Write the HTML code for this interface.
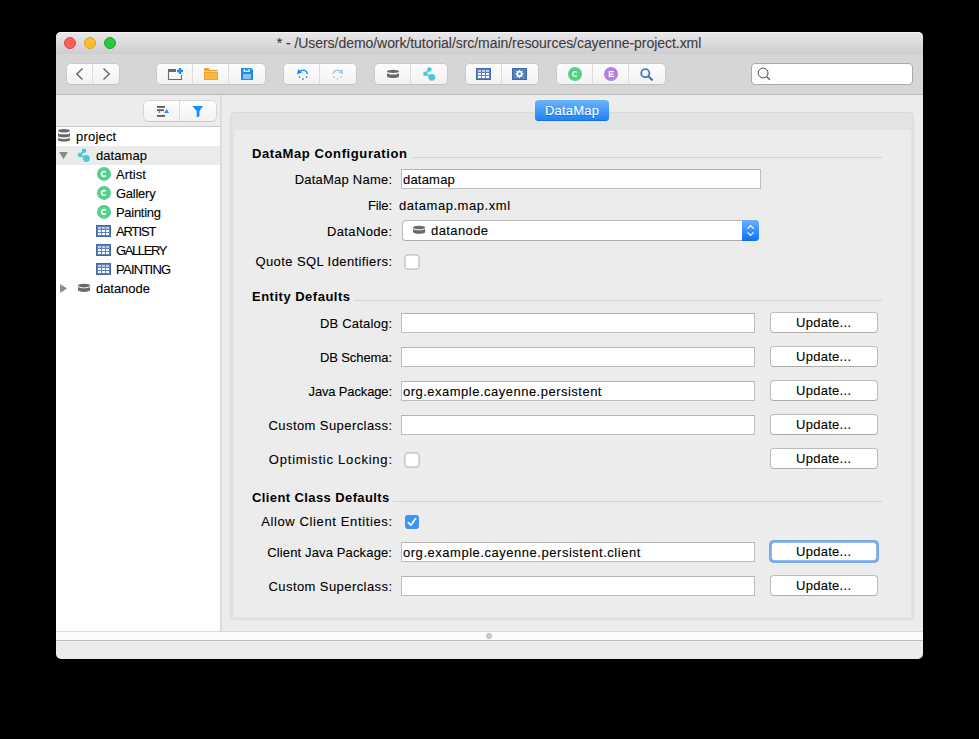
<!DOCTYPE html>
<html><head><meta charset="utf-8"><title>Cayenne Modeler</title>
<style>
*{margin:0;padding:0;box-sizing:border-box}
html,body{width:979px;height:739px;background:#000;overflow:hidden}
body{position:relative;font-family:"Liberation Sans",sans-serif;font-size:13px;line-height:16px;color:#000}
div,svg{position:absolute}
.t{white-space:nowrap;-webkit-text-stroke:0.1px currentColor}
#win{left:56px;top:32px;width:867px;height:627px;background:#ececec;border-radius:5px;overflow:hidden}
#titlebar{left:56px;top:32px;width:867px;height:22px;background:linear-gradient(#e8e6e8,#cfcdcf);border-radius:5px 5px 0 0;border-top:1px solid #f4f4f4}
#toolbar{left:56px;top:54px;width:867px;height:41px;background:#d6d6d6;border-bottom:1px solid #b9b9b9}
.light{top:37px;width:12px;height:12px;border-radius:50%;border:0.5px solid}
.seg{background:linear-gradient(#fdfdfd,#f2f2f2);border-radius:4px;box-shadow:0 0 0 0.5px #bdbdbd,0 0.5px 0.5px #b0b0b0}
.segdiv{width:1px;background:#dcdcdc}
.fld{background:#fff;border:1px solid #bebebe;border-top-color:#b4b4b4}
.btn{background:#fff;border-radius:4px;border:1px solid #bcbcbc;border-bottom-color:#acacac}
.chk{width:14px;height:14px;border-radius:3px;background:#fff;box-shadow:0 0 0 0.5px #a8a8a8,inset 0 0 0 0.5px #b5b5b5}
.sep{height:1px;background:#d3d3d3}
</style></head>
<body>
<div id="win"></div>
<div id="titlebar"></div>
<div class="light" style="left:64px;background:#fd5f57;border-color:#e0443e"></div>
<div class="light" style="left:84px;background:#febc2e;border-color:#dea123"></div>
<div class="light" style="left:104px;background:#28c840;border-color:#1aab29"></div>
<div class="t" style="top:35px;font-size:14px;letter-spacing:-0.05px;color:#3c3c3c;left:189px;width:600px;text-align:center;">* - /Users/demo/work/tutorial/src/main/resources/cayenne-project.xml</div>
<div id="toolbar"></div>
<div class="seg" style="left:67px;top:64px;width:52px;height:20px;"></div>
<div class="segdiv" style="left:92px;top:64px;width:1px;height:20px;"></div>
<div class="seg" style="left:157px;top:64px;width:108px;height:20px;"></div>
<div class="segdiv" style="left:192px;top:64px;width:1px;height:20px;"></div>
<div class="segdiv" style="left:228px;top:64px;width:1px;height:20px;"></div>
<div class="seg" style="left:284px;top:64px;width:72px;height:20px;"></div>
<div class="segdiv" style="left:319px;top:64px;width:1px;height:20px;"></div>
<div class="seg" style="left:375px;top:64px;width:72px;height:20px;"></div>
<div class="segdiv" style="left:410px;top:64px;width:1px;height:20px;"></div>
<div class="seg" style="left:466px;top:64px;width:72px;height:20px;"></div>
<div class="segdiv" style="left:501px;top:64px;width:1px;height:20px;"></div>
<div class="seg" style="left:557px;top:64px;width:108px;height:20px;"></div>
<div class="segdiv" style="left:592px;top:64px;width:1px;height:20px;"></div>
<div class="segdiv" style="left:628px;top:64px;width:1px;height:20px;"></div>
<div style="left:751px;top:63px;width:162px;height:22px;background:#fff;border:1px solid #a9a9a9;border-radius:4px"></div>
<div style="left:56px;top:95px;width:164px;height:32px;background:#ececec;border-bottom:1px solid #c9c9c9"></div>
<div style="left:56px;top:127px;width:164px;height:504px;background:#fff"></div>
<div style="left:220px;top:95px;width:2px;height:536px;background:#dcdcdc"></div>
<div class="seg" style="left:144px;top:101px;width:72px;height:20px;"></div>
<div class="segdiv" style="left:179px;top:101px;width:1px;height:20px;"></div>
<div style="left:56px;top:146px;width:164px;height:19px;background:#ebebeb"></div>
<div class="t" style="top:129px;letter-spacing:0.2px;left:76px;">project</div>
<div class="t" style="top:148px;letter-spacing:0.05px;left:96px;">datamap</div>
<div class="t" style="top:167px;letter-spacing:0.05px;left:116px;">Artist</div>
<div class="t" style="top:186px;letter-spacing:-0.25px;left:116px;">Gallery</div>
<div class="t" style="top:205px;letter-spacing:-0.3px;left:116px;">Painting</div>
<div class="t" style="top:224px;letter-spacing:-1.1px;left:116px;">ARTIST</div>
<div class="t" style="top:243px;letter-spacing:-1.4px;left:116px;">GALLERY</div>
<div class="t" style="top:262px;letter-spacing:-0.75px;left:116px;">PAINTING</div>
<div class="t" style="top:281px;letter-spacing:-0.05px;left:96px;">datanode</div>
<div style="left:230px;top:112px;width:684px;height:508px;background:#e3e3e3;border:1px solid #dadada;border-radius:4px"></div>
<div style="left:234px;top:130px;width:677px;height:487px;background:#ececec"></div>
<div style="left:535px;top:100px;width:74px;height:21px;border-radius:4px;background:linear-gradient(#6cb3fb,#1b80fb);box-shadow:inset 0 -1px 0 #1a6fe8"></div>
<div class="t" style="top:103px;letter-spacing:0.2px;color:#fff;left:545px;-webkit-text-stroke:0.1px #fff;text-shadow:0 0.5px 0.5px rgba(0,40,120,0.35)">DataMap</div>
<div class="t" style="top:146px;font-weight:700;-webkit-text-stroke:0;letter-spacing:0.6px;left:252px;">DataMap Configuration</div>
<div class="sep" style="left:413px;top:157px;width:469px;height:1px;"></div>
<div class="t" style="top:289px;font-weight:700;-webkit-text-stroke:0;letter-spacing:0.5px;left:252px;">Entity Defaults</div>
<div class="sep" style="left:354px;top:300px;width:528px;height:1px;"></div>
<div class="t" style="top:490px;font-weight:700;-webkit-text-stroke:0;letter-spacing:0.4px;left:252px;">Client Class Defaults</div>
<div class="sep" style="left:393px;top:501px;width:489px;height:1px;"></div>
<div class="t" style="top:172px;letter-spacing:0.22px;right:586.78px;text-align:right;">DataMap Name:</div>
<div class="fld" style="left:401px;top:169px;width:360px;height:20px;"></div>
<div class="t" style="top:172px;letter-spacing:0.2px;left:403px;">datamap</div>
<div class="t" style="top:198px;letter-spacing:-0.15px;right:587.15px;text-align:right;">File:</div>
<div class="t" style="top:198px;letter-spacing:0.55px;left:399px;">datamap.map.xml</div>
<div class="t" style="top:224px;letter-spacing:0.35px;right:586.65px;text-align:right;">DataNode:</div>
<div style="left:402px;top:220px;width:357px;height:21px;background:#fff;border-radius:4px;border:1px solid #bababa;border-bottom-color:#acacac"></div>
<div style="left:742px;top:220px;width:17px;height:21px;border-radius:0 4px 4px 0;background:linear-gradient(#6bb1fb,#0b6ffa)"></div>
<div class="t" style="top:223px;letter-spacing:0.4px;left:431px;">datanode</div>
<div class="t" style="top:254px;letter-spacing:0.4px;right:586.6px;text-align:right;">Quote SQL Identifiers:</div>
<div class="chk" style="left:405px;top:255px;width:14px;height:14px;"></div>
<div class="t" style="top:316px;letter-spacing:0.19px;right:586.81px;text-align:right;">DB Catalog:</div>
<div class="fld" style="left:401px;top:313px;width:354px;height:20px;"></div>
<div class="btn" style="left:770px;top:312px;width:108px;height:21px;"></div>
<div class="t" style="top:315px;letter-spacing:0.28px;left:796px;">Update...</div>
<div class="t" style="top:350px;letter-spacing:-0.1px;right:587.1px;text-align:right;">DB Schema:</div>
<div class="fld" style="left:401px;top:347px;width:354px;height:20px;"></div>
<div class="btn" style="left:770px;top:346px;width:108px;height:21px;"></div>
<div class="t" style="top:349px;letter-spacing:0.28px;left:796px;">Update...</div>
<div class="t" style="top:384px;letter-spacing:-0.15px;right:587.15px;text-align:right;">Java Package:</div>
<div class="fld" style="left:401px;top:381px;width:354px;height:20px;"></div>
<div class="t" style="top:384px;letter-spacing:0.49px;left:403px;">org.example.cayenne.persistent</div>
<div class="btn" style="left:770px;top:380px;width:108px;height:21px;"></div>
<div class="t" style="top:383px;letter-spacing:0.28px;left:796px;">Update...</div>
<div class="t" style="top:418px;letter-spacing:0.42px;right:586.58px;text-align:right;">Custom Superclass:</div>
<div class="fld" style="left:401px;top:415px;width:354px;height:20px;"></div>
<div class="btn" style="left:770px;top:414px;width:108px;height:21px;"></div>
<div class="t" style="top:417px;letter-spacing:0.28px;left:796px;">Update...</div>
<div class="t" style="top:452px;letter-spacing:0.78px;right:586.22px;text-align:right;">Optimistic Locking:</div>
<div class="chk" style="left:405px;top:453px;width:14px;height:14px;"></div>
<div class="btn" style="left:770px;top:448px;width:108px;height:21px;"></div>
<div class="t" style="top:451px;letter-spacing:0.28px;left:796px;">Update...</div>
<div class="t" style="top:514px;letter-spacing:0.62px;right:586.38px;text-align:right;">Allow Client Entities:</div>
<div style="left:405px;top:515px;width:14px;height:14px;border-radius:3px;background:#3c94f7"></div>
<svg style="left:405px;top:515px" width="14" height="14"><path d="M3.3 7.6 L5.8 10.2 L10.6 3.6" fill="none" stroke="#fff" stroke-width="1.7" stroke-linecap="round" stroke-linejoin="round"/></svg>
<div class="t" style="top:545px;letter-spacing:0.14px;right:586.86px;text-align:right;">Client Java Package:</div>
<div class="fld" style="left:401px;top:542px;width:354px;height:20px;"></div>
<div class="t" style="top:545px;letter-spacing:0.53px;left:403px;">org.example.cayenne.persistent.client</div>
<div style="left:769px;top:540px;width:110px;height:23px;border-radius:5px;background:#7cade9;box-shadow:inset 0 0 0 1.5px #78a8e6"></div>
<div style="left:772px;top:543px;width:104px;height:17px;border-radius:3px;background:#fff;box-shadow:0 0 0.5px 0.5px #a9ccf5"></div>
<div class="t" style="top:544px;letter-spacing:0.28px;left:796px;">Update...</div>
<div class="t" style="top:579px;letter-spacing:0.42px;right:586.58px;text-align:right;">Custom Superclass:</div>
<div class="fld" style="left:401px;top:576px;width:354px;height:20px;"></div>
<div class="btn" style="left:770px;top:575px;width:108px;height:21px;"></div>
<div class="t" style="top:578px;letter-spacing:0.28px;left:796px;">Update...</div>
<svg style="left:0;top:0" width="979" height="739"><path d="M82.5 68.5 L76.8 74 L82.5 79.5 M103.5 68.5 L109.2 74 L103.5 79.5" stroke="#6c6c6c" stroke-width="1.5" fill="none"/><path d="M168.5 72 V79.5 H181.5 V75" stroke="#6a6a6a" stroke-width="1.1" fill="none"/><rect x="168" y="69" width="8" height="3" fill="#6a6a6a"/><path d="M177 71 H183 M180 68 V74" stroke="#1a8cff" stroke-width="2.3"/><path d="M204.5 68.5 H208.3 L210.5 70.5 H217.5 V71 H204.5 Z" fill="#f3ad3b" stroke="#e8a232" stroke-width="1"/><rect x="204.5" y="72.5" width="13" height="7" fill="#fdb643" stroke="#e9a431" stroke-width="1"/><path d="M241 68 H251 L253 70 V80 H241 Z" fill="#1f89e6"/><rect x="243.5" y="69" width="6.5" height="3" fill="#d9ecfb"/><rect x="245" y="69" width="3.5" height="1.7" fill="#3a97e8"/><rect x="243" y="74" width="8" height="5" fill="#82c2f6"/><path d="M299.73 71.66 A4.4 4.4 0 0 1 307.36 73.99" stroke="#1b8cfa" stroke-width="1.45" fill="none"/><path d="M298.3 68.9 L297.0 74.4 L302.0 72.5 Z" fill="#1b8cfa"/><path d="M299.85 77.78 L298.94 76.47" stroke="#1b8cfa" stroke-width="1.3"/><path d="M303.80 79.00 L302.20 79.00" stroke="#1b8cfa" stroke-width="1.3"/><path d="M307.06 76.47 L306.15 77.78" stroke="#1b8cfa" stroke-width="1.3"/><g transform="translate(640.5,0) scale(-1,1)"><path d="M299.73 71.66 A4.4 4.4 0 0 1 307.36 73.99" stroke="#a9c6de" stroke-width="1.45" fill="none"/><path d="M298.3 68.9 L297.0 74.4 L302.0 72.5 Z" fill="#a9c6de"/><path d="M299.85 77.78 L298.94 76.47" stroke="#a9c6de" stroke-width="1.3"/><path d="M303.80 79.00 L302.20 79.00" stroke="#a9c6de" stroke-width="1.3"/><path d="M307.06 76.47 L306.15 77.78" stroke="#a9c6de" stroke-width="1.3"/></g><ellipse cx="393.00" cy="71.4" rx="6.00" ry="1.7" fill="#696969"/><path d="M387 72.7 A6.00 1.7 0 0 0 399 72.7 V76.2 A6.00 1.7 0 0 1 387 76.2 Z" fill="#696969"/><path d="M429.40 69.50 L425.30 73.80 L431.80 77.30" stroke="#48c9da" stroke-width="1.7" fill="none"/><circle cx="429.40" cy="69.50" r="2.3" fill="#48c9da"/><circle cx="425.30" cy="73.80" r="2.2" fill="#48c9da"/><circle cx="431.80" cy="77.30" r="3.4" fill="#48c9da"/><rect x="476.5" y="68.5" width="14" height="11" fill="#5a82c1" stroke="#4469aa" stroke-width="1"/><rect x="478" y="70" width="3" height="2" fill="#b9cbe6"/><rect x="482" y="70" width="3" height="2" fill="#b9cbe6"/><rect x="486" y="70" width="3" height="2" fill="#b9cbe6"/><rect x="478" y="73" width="3" height="2" fill="#fff"/><rect x="482" y="73" width="3" height="2" fill="#fff"/><rect x="486" y="73" width="3" height="2" fill="#fff"/><rect x="478" y="76" width="3" height="2" fill="#fff"/><rect x="482" y="76" width="3" height="2" fill="#fff"/><rect x="486" y="76" width="3" height="2" fill="#fff"/><rect x="512.5" y="68.5" width="14" height="11" fill="#5781c1" stroke="#4168a9" stroke-width="1"/><polygon points="519.11,69.92 519.89,69.92 520.34,71.12 520.87,71.34 522.04,70.81 522.59,71.36 522.06,72.53 522.28,73.06 523.48,73.51 523.48,74.29 522.28,74.74 522.06,75.27 522.59,76.44 522.04,76.99 520.87,76.46 520.34,76.68 519.89,77.88 519.11,77.88 518.66,76.68 518.13,76.46 516.96,76.99 516.41,76.44 516.94,75.27 516.72,74.74 515.52,74.29 515.52,73.51 516.72,73.06 516.94,72.53 516.41,71.36 516.96,70.81 518.13,71.34 518.66,71.12" fill="#fff"/><circle cx="519.5" cy="73.9" r="1.3" fill="#5781c1"/><circle cx="575" cy="74" r="7" fill="#55d08b"/><path d="M576.71 72.46 A2.3 2.3 0 1 0 576.71 75.54" fill="none" stroke="#fff" stroke-width="1.3"/><circle cx="611" cy="74" r="7" fill="#b47fdf"/><path d="M613.9 71.7 H609.3 V76.3 H613.9 M609.3 74 H613.5" fill="none" stroke="#fff" stroke-width="1.25"/><circle cx="645.3" cy="73.2" r="4.1" stroke="#4b78b8" stroke-width="1.9" fill="none"/><path d="M648.3 76.3 L652.6 80.4" stroke="#4b78b8" stroke-width="2.2"/><circle cx="763.1" cy="73" r="4.9" stroke="#4f4f4f" stroke-width="1" fill="none"/><path d="M766.6 76.6 L769.8 79.8" stroke="#4f4f4f" stroke-width="1.3"/><rect x="157" y="106" width="8" height="1.8" fill="#5a5a5a"/><rect x="157" y="109.3" width="7" height="1.7" fill="#5a5a5a"/><rect x="158.8" y="111" width="0.9" height="2" fill="#5a5a5a"/><rect x="157" y="115" width="8" height="1.8" fill="#5a5a5a"/><path d="M164.2 113 L166.6 109 L169 113 Z" fill="#1a8cff"/><path d="M192.3 105.9 H203 L199.5 111 V116.3 L196.7 117.2 V111 Z" fill="#1a8cff"/><ellipse cx="64.00" cy="130.8" rx="6.00" ry="1.7" fill="#6c6c6c"/><path d="M58 133.0 A6.00 1.3 0 0 0 70 133.0 V136.2 A6.00 1.3 0 0 1 58 136.2 Z" fill="#6c6c6c"/><path d="M58 137.6 A6.00 1.3 0 0 0 70 137.6 V140.3 A6.00 1.3 0 0 1 58 140.3 Z" fill="#6c6c6c"/><path d="M59.1 152.1 H67.9 L63.5 159.2 Z" fill="#8a8a8a"/><path d="M84.00 150.70 L79.90 155.00 L86.40 158.50" stroke="#48c9da" stroke-width="1.7" fill="none"/><circle cx="84.00" cy="150.70" r="2.3" fill="#48c9da"/><circle cx="79.90" cy="155.00" r="2.2" fill="#48c9da"/><circle cx="86.40" cy="158.50" r="3.4" fill="#48c9da"/><circle cx="104" cy="173.9" r="7" fill="#55d08b"/><path d="M105.78 172.29 A2.4 2.4 0 1 0 105.78 175.51" fill="none" stroke="#fff" stroke-width="1.6"/><circle cx="104" cy="192.9" r="7" fill="#55d08b"/><path d="M105.78 191.29 A2.4 2.4 0 1 0 105.78 194.51" fill="none" stroke="#fff" stroke-width="1.6"/><circle cx="104" cy="211.9" r="7" fill="#55d08b"/><path d="M105.78 210.29 A2.4 2.4 0 1 0 105.78 213.51" fill="none" stroke="#fff" stroke-width="1.6"/><rect x="96.5" y="225.5" width="14" height="11" fill="#5a82c1" stroke="#4469aa" stroke-width="1"/><rect x="98" y="227" width="3" height="2" fill="#b9cbe6"/><rect x="102" y="227" width="3" height="2" fill="#b9cbe6"/><rect x="106" y="227" width="3" height="2" fill="#b9cbe6"/><rect x="98" y="230" width="3" height="2" fill="#fff"/><rect x="102" y="230" width="3" height="2" fill="#fff"/><rect x="106" y="230" width="3" height="2" fill="#fff"/><rect x="98" y="233" width="3" height="2" fill="#fff"/><rect x="102" y="233" width="3" height="2" fill="#fff"/><rect x="106" y="233" width="3" height="2" fill="#fff"/><rect x="96.5" y="244.5" width="14" height="11" fill="#5a82c1" stroke="#4469aa" stroke-width="1"/><rect x="98" y="246" width="3" height="2" fill="#b9cbe6"/><rect x="102" y="246" width="3" height="2" fill="#b9cbe6"/><rect x="106" y="246" width="3" height="2" fill="#b9cbe6"/><rect x="98" y="249" width="3" height="2" fill="#fff"/><rect x="102" y="249" width="3" height="2" fill="#fff"/><rect x="106" y="249" width="3" height="2" fill="#fff"/><rect x="98" y="252" width="3" height="2" fill="#fff"/><rect x="102" y="252" width="3" height="2" fill="#fff"/><rect x="106" y="252" width="3" height="2" fill="#fff"/><rect x="96.5" y="263.5" width="14" height="11" fill="#5a82c1" stroke="#4469aa" stroke-width="1"/><rect x="98" y="265" width="3" height="2" fill="#b9cbe6"/><rect x="102" y="265" width="3" height="2" fill="#b9cbe6"/><rect x="106" y="265" width="3" height="2" fill="#b9cbe6"/><rect x="98" y="268" width="3" height="2" fill="#fff"/><rect x="102" y="268" width="3" height="2" fill="#fff"/><rect x="106" y="268" width="3" height="2" fill="#fff"/><rect x="98" y="271" width="3" height="2" fill="#fff"/><rect x="102" y="271" width="3" height="2" fill="#fff"/><rect x="106" y="271" width="3" height="2" fill="#fff"/><path d="M60.1 284.1 V292.9 L67 288.5 Z" fill="#8a8a8a"/><ellipse cx="84.00" cy="285.55" rx="6.00" ry="1.85" fill="#6a6a6a"/><path d="M78 286.4 A6.00 1.8 0 0 0 90 286.4 V290.1 A6.00 1.8 0 0 1 78 290.1 Z" fill="#6a6a6a"/><ellipse cx="419.10" cy="227.45" rx="6.10" ry="1.75" fill="#6a6a6a"/><path d="M413 228.5 A6.10 1.75 0 0 0 425.2 228.5 V232.1 A6.10 1.75 0 0 1 413 232.1 Z" fill="#6a6a6a"/><path d="M747.6 228.6 L750.6 225.6 L753.6 228.6 M747.6 232.4 L750.6 235.4 L753.6 232.4" stroke="#fff" stroke-width="1.3" fill="none"/></svg>
<div style="left:56px;top:631px;width:867px;height:10px;background:#fbfbfb;border-top:1px solid #dadada;border-bottom:1px solid #bdbdbd"></div>
<div style="left:486px;top:633px;width:6px;height:6px;border-radius:50%;background:#d0d0d0;border:0.5px solid #b8b8b8"></div>
</body></html>
